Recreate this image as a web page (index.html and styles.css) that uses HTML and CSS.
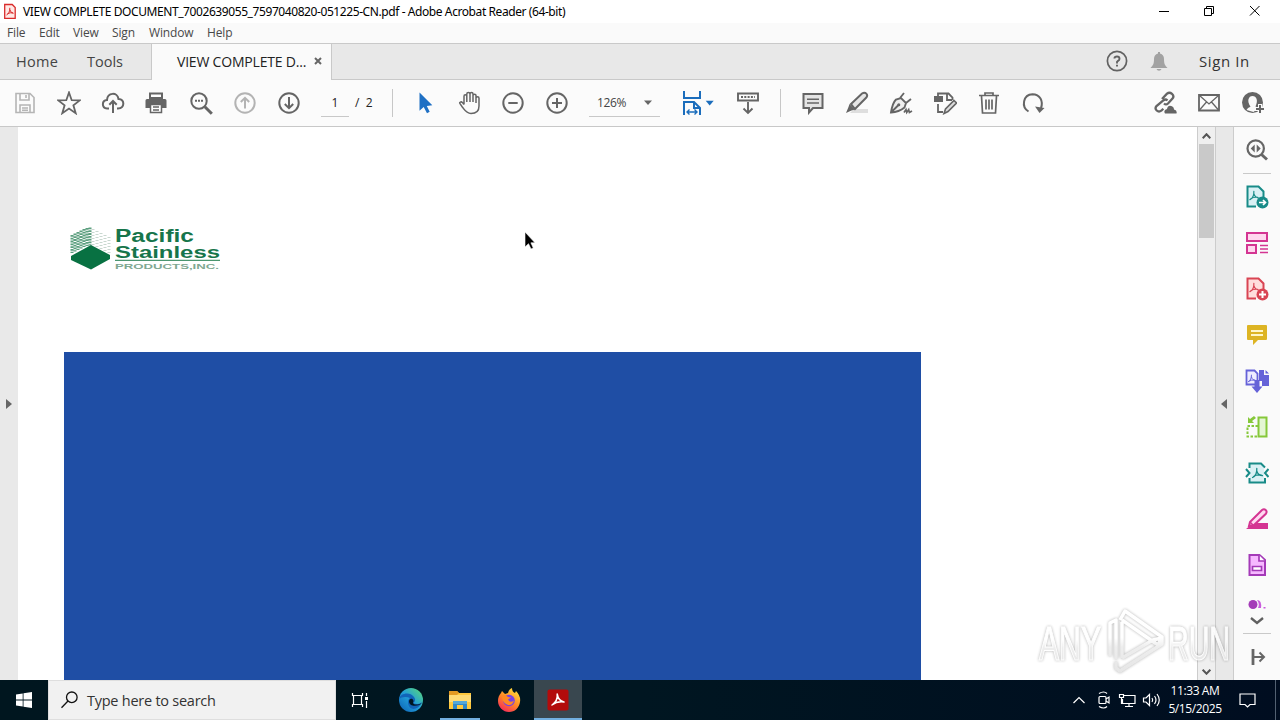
FILE: index.html
```html
<!DOCTYPE html>
<html lang="en">
<head>
<meta charset="utf-8">
<title>Adobe Acrobat Reader (64-bit)</title>
<link rel="stylesheet" href="styles.css">
</head>
<body>
<svg width="0" height="0" class="defs">
  <defs>
    <linearGradient id="edge" x1="0" y1="1" x2="1" y2="0"><stop offset="0" stop-color="#0b5fb4"/><stop offset=".5" stop-color="#229ed9"/><stop offset="1" stop-color="#5ddc72"/></linearGradient>
    <linearGradient id="fox" x1=".8" y1="0" x2=".2" y2="1"><stop offset="0" stop-color="#ffe13d"/><stop offset=".5" stop-color="#ff8b26"/><stop offset="1" stop-color="#f5245d"/></linearGradient>
    <linearGradient id="glass" x1="0" y1="0" x2="0" y2="1"><stop offset=".45" stop-color="#fff"/><stop offset=".6" stop-color="#ebebeb"/><stop offset="1" stop-color="#e2e2e2"/></linearGradient>
    <symbol id="pdfmark" viewBox="0 0 12 12"><path d="M1 10.500C4 9 5.500 5 5.300 1.500M5.300 4C6 7 8 8.500 11 8.700M2 9.500Q5 7.500 9.500 8" fill="none" stroke="currentColor" stroke-width="1.300" stroke-linecap="round"/></symbol>
  </defs>
</svg>
<div class="screen">
  <header class="titlebar">
    <svg class="appicon" width="12" height="16" viewBox="0 0 12 16"><path d="M.7 1.500h7.500l3 3v10.800H.7z" fill="#ffe9e6" stroke="#d92b2b" stroke-width="1.300"/><path d="M2.500 12C4.500 11 6.200 8 5.800 4.800M5.800 6.600Q6.600 10 9.600 10.300M3.500 10.800Q6 9.200 9 10" fill="none" stroke="#d92b2b"/></svg>
    <span class="title">VIEW COMPLETE DOCUMENT_7002639055_7597040820-051225-CN.pdf - Adobe Acrobat Reader (64-bit)</span>
    <svg class="winbtns" width="116" height="22" viewBox="0 0 116 22" fill="none" stroke="#000"><path d="M5 10.500h10M50.500 7.500h7v7h-7zM52.500 7V5.500h7v7H58M96 5l9.500 9.500M105.500 5L96 14.500"/></svg>
  </header>
  <nav class="menubar"><span class="m1">File</span><span class="m2">Edit</span><span class="m3">View</span><span class="m4">Sign</span><span class="m5">Window</span><span class="m6">Help</span></nav>
  <div class="tabs">
    <span class="home">Home</span><span class="tools">Tools</span>
    <div class="tab"><span class="tabname">VIEW COMPLETE D...</span><svg width="8" height="8" viewBox="0 0 8 8"><path d="M1 1l6 6M7 1L1 7" stroke="#666" stroke-width="2"/></svg></div>
    <div class="account">
      <svg width="22" height="22" viewBox="0 0 22 22" fill="none" stroke="#626262"><circle cx="11" cy="11" r="9.600" stroke-width="1.700"/><path d="M8.400 8.500Q8.600 6.500 11 6.500t2.500 2.200Q13.500 10 12 10.900T11 13v.4M11 14.800v1.800" stroke-width="1.900"/></svg>
      <svg class="bell" width="18" height="20" viewBox="0 0 18 20" fill="#a2a2a2"><path d="M8 1h2v1.500q4 1 4 5.500c0 5 1 6.500 3.500 9H.5C3 14.500 4 13 4 8q0-4.500 4-5.500zM6.500 18h5q-.7 1.800-2.500 1.800T6.500 18z"/></svg>
      <span class="signin">Sign In</span>
    </div>
  </div>
  <div class="toolbar">
    <div class="slots g1">
      <svg viewBox="0 0 24 24" stroke="#b5b5b5"><path d="M3 2.500h14l4 4v15H3zM7 3v6h9V3M13 4v3M7 21v-7h10v7M9 17h6M9 19.300h6" stroke-width="1.600"/></svg>
      <svg viewBox="0 0 24 24"><path d="M12 1.500l2.700 7.700 8.100.2-6.400 4.900 2.300 7.900L12 17.500l-6.700 4.700 2.300-7.900L1.200 9.400l8.100-.2z" stroke-width="1.800"/></svg>
      <svg viewBox="0 0 24 24"><path d="M8 17.500H6C.5 17 .5 9.500 6 9 6.500 1 16.500 1 17.500 8c6.500.5 6.500 9-.5 9.500h-1M12 22V10M8.300 13.700L12 10l3.700 3.700" stroke-width="2"/></svg>
      <svg class="printer" viewBox="0 0 24 24"><path d="M6 2.500h12V7H6z" fill="#fff"/><path d="M3 8h18q1.500 0 1.500 1.500V17H18v-4H6v4H1.500V9.500Q1.500 8 3 8z" fill="#656565" stroke="none"/><path d="M6.500 13.500h11v8h-11zM9 16h6M9 19h6" fill="#fff" stroke-width="1.500"/></svg>
      <svg viewBox="0 0 24 24"><circle cx="10" cy="10" r="7.700" stroke-width="2"/><path d="M15.800 15.800l7 7" stroke-width="3"/><path d="M6 9.800h2M9 9.800h2M12 9.800h2" stroke-width="2"/></svg>
      <svg viewBox="0 0 24 24" stroke="#b3b3b3"><circle cx="12" cy="12" r="9.700"/><path d="M12 17.500V7M7.800 11L12 6.800l4.200 4.200" stroke-width="2"/></svg>
      <svg viewBox="0 0 24 24"><circle cx="12" cy="12" r="9.700"/><path d="M12 6v11M7.800 13l4.200 4.200 4.200-4.200" stroke-width="2"/></svg>
    </div>
    <span class="pagebox">1</span><span class="pages">/&nbsp; 2</span><i class="sep s1"></i>
    <div class="slots g2">
      <svg viewBox="0 0 24 24"><path d="M6.500 1.500v18.300l4.200-3.700 3.300 6.100 2.700-1.400-2.900-5.900 5.500-.6z" fill="#1f70c4" stroke="none"/></svg>
      <svg class="hand" viewBox="0 0 24 24"><path d="M6 13.500V5.200Q6 3.800 7.300 3.800t1.500 1.400V3q0-1.500 1.600-1.500T12 3v-.2q0-1.300 1.500-1.300T15 3v1.500q0-1.300 1.500-1.300T18 4.500V7q0-1.200 1.500-1.200T21 7.200V15c0 5-3 7.500-8 7.500-4.500 0-6-3-8.700-6.500L2 12.600q-.8-1 .3-1.500 1.200-.6 2 .3L6 13.500M8.800 5v6M12 3v8M15 4v7M18 7v5" stroke-width="1.500"/></svg>
      <svg viewBox="0 0 24 24"><circle cx="12" cy="12" r="9.700"/><path d="M7.300 12h9.400" stroke-width="2"/></svg>
      <svg viewBox="0 0 24 24"><circle cx="12" cy="12" r="9.700"/><path d="M7 12h10M12 7v10" stroke-width="2"/></svg>
    </div>
    <div class="zoombox"><span>126%</span><svg width="8" height="5"><path d="M0 .5h8L4 5z" fill="#666"/></svg></div>
    <svg class="fit" width="32" height="26" viewBox="0 0 32 26" fill="none" stroke="#1b6dbc" stroke-width="2"><path d="M2 1v7h16V1M2 25V12h10l6 6v7M12 12v6h6"/><path d="M5 22h10M7.500 19.500L5 22l2.500 2.500M12.500 19.500L15 22l-2.500 2.500" stroke-width="1.400"/><path d="M23.700 10.800h8l-4 4.700z" fill="#1b6dbc" stroke="none"/></svg>
    <svg class="scroll" width="24" height="24" viewBox="0 0 24 24"><path d="M2 2.500h20v7H2zM12 11v11M7.500 17.500L12 22l4.500-4.500" stroke-width="1.900"/><path d="M5 6h14" stroke-dasharray="2 1.300"/></svg>
    <i class="sep s2"></i>
    <div class="slots g3">
      <svg viewBox="0 0 24 24"><path d="M2.500 3h19v14H12l-4 4.500V17H2.500z" fill="#e4e4e4"/><path d="M6 8.300h12M6 12h12" stroke-width="1.400"/></svg>
      <svg viewBox="0 0 24 24"><path d="M9 18h14v4H5z" fill="#dedede" stroke="none"/><path d="M6 13L17 2.500q2.500-1.700 4.300.1t-.2 4.200L10 18z" fill="#e5e5e5"/><path d="M4.500 13l5.500 5.500-3.500 1L1 22l2.500-6z" fill="#656565" stroke="none"/></svg>
      <svg viewBox="0 0 24 24"><path d="M2 21.500Q3.500 12 7 8.500l5-1.500 5 5-1.500 4.500Q10 21 2 21.500zM2.500 21l7-7M11 7l4-5M17 12l5-4" fill="#eee" stroke-width="1.900"/><circle cx="9.800" cy="13.700" r="1.500" fill="#656565" stroke="none"/><path d="M15 21.500l2-3 .7 3 2-3 .7 3 2.600-1.500" stroke-width="1.600"/></svg>
      <svg viewBox="0 0 24 24"><path d="M5 6V2.500h10.500l4 4V9M14 3v6h5M5 13v8h5" stroke-width="1.800"/><path d="M1 5h9v6H1z" fill="#656565" stroke="none"/><path d="M21 9.500l2.500 2.500-8.500 8.500-4 2 1.500-4.500z" fill="#ddd" stroke-width="1.600"/></svg>
      <svg viewBox="0 0 24 24"><path d="M2 4.500h20M8 4.500V2h8v2.500M4.500 5l1 17h13l1-17M9 8.500v10M12 8.500v10M15 8.500v10" stroke-width="1.700"/></svg>
      <svg viewBox="0 0 24 24"><path d="M7.500 20.500C0 16 2 3.500 11.500 3.200c7.500 0 11 6.800 8.500 14"/><path d="M14 15.500l9.500 1.500-5 5z" fill="#656565" stroke="none"/></svg>
    </div>
    <div class="slots g4">
      <svg viewBox="0 0 24 24"><path d="M9 8l5-5.300q2.500-2 5 .2t.5 4.700L15 12.500q-2 1.800-4 0M14.500 9.500q-2-2-4.500.2L3.500 15q-2 2.500.2 4.500t4.600.2l2-2" stroke-width="2.300"/><path d="M12 22.500q-2-3.500 2-4.500 1-4.500 5-2.800 2.200 1 2 3.300 3.500 1 2.500 4z" fill="#656565" stroke="none"/></svg>
      <svg viewBox="0 0 24 24"><path d="M2 4h20v15.500H2z" stroke-width="1.800"/><path d="M2.500 4.500L12 13l9.500-8.500M2.500 19l7-8M21.500 19l-7-8" stroke-width="1.300"/></svg>
      <svg viewBox="0 0 24 24"><circle cx="11.500" cy="11.500" r="10.500" fill="#656565" stroke="none"/><path d="M5.500 19q1-2.500 4-3.300C5.500 10 7.500 5 11.500 5s6 4.500 3 10.500l3 1.500-5 4z" fill="#fafafa" stroke="none"/><path d="M19 13v10M14 18h10" stroke="#fafafa" stroke-width="4"/><path d="M19 14v8M15 18h8"/></svg>
    </div>
  </div>
  <main class="workspace">
    <div class="leftstrip"><svg width="6" height="10"><path d="M0 0v10l6-5z" fill="#666"/></svg></div>
    <section class="page">
      <svg class="logo" width="160" height="50" viewBox="0 0 160 50">
        <path d="M8 14v18M11 12.500v18M14 11v18M17 9.500v18M20 8v18M23 7v18M26 6.500v18" stroke="#5c9f7f" stroke-width="3" stroke-dasharray="1.800 1"/>
        <path d="M29 8v16M33 10v16M37 12v16M41 14v16M45 16v16" stroke="#c9d8d0" stroke-width="3" stroke-dasharray="1 2"/>
        <path d="M7 35l20-11 19 10v4L27 48.500 7 39z" fill="#087142"/>
        <g class="brand"><text x="51" y="20.500" font-size="17.500" textLength="79" lengthAdjust="spacingAndGlyphs">Pacific</text><text x="51" y="36.500" font-size="16.500" textLength="105" lengthAdjust="spacingAndGlyphs">Stainless</text><path d="M51 39.300h105" stroke="#4b9670" stroke-width="1.300"/><text x="51" y="48.300" font-size="7" textLength="104" lengthAdjust="spacingAndGlyphs" fill="#7fa892">PRODUCTS,INC.</text></g>
      </svg>
      <div class="bluebox"></div>
    </section>
    <div class="scrollbar"><svg width="9" height="6"><path d="M.7 5.200l3.800-4 3.800 4" fill="none" stroke="#555" stroke-width="2"/></svg><div class="thumb"></div><svg class="down" width="9" height="6"><path d="M.7.7l3.800 4 3.800-4" fill="none" stroke="#555" stroke-width="2"/></svg></div>
    <div class="rightstrip"><svg width="6" height="10"><path d="M6 0v10L0 5z" fill="#666"/></svg></div>
    <aside class="rail">
      <svg class="search" viewBox="0 0 24 24" stroke="#666" stroke-width="2.200"><circle cx="10.700" cy="10.500" r="8.200"/><path d="M16.500 16.500l5.500 5" stroke-width="3"/><path d="M9.700 6.500v8L5.700 10.500zM11.700 6.500v8l4-4z" fill="#666" stroke="none"/></svg>
      <i class="rule"></i>
      <div class="stack">
        <svg viewBox="0 0 24 24" color="#188b88"><path d="M11 21.500H2.500v-20h11l5 5V12" fill="#d9f0f4"/><use href="#pdfmark" x="4" y="5" width="11" height="11"/><circle cx="17.500" cy="17.500" r="6" fill="#188b88" stroke="none"/><path d="M14 17.500h6.500M18 15l2.500 2.500L18 20" stroke="#fff" stroke-width="1.700"/></svg>
        <svg viewBox="0 0 24 24" color="#d43592"><path d="M2 2h20v8H2zM2 14h9v8H2z" fill="#ffd7ee"/><path d="M15 14.500h8M15 18h8M15 21.500h8" stroke-width="1.300"/></svg>
        <svg viewBox="0 0 24 24" color="#d94453"><path d="M11 21.500H2.500v-20h11l5 5V12" fill="#ffdedd"/><use href="#pdfmark" x="4" y="5" width="11" height="11"/><circle cx="17.500" cy="17.500" r="6" fill="#d94453" stroke="none"/><path d="M14 17.500h7M17.500 14v7" stroke="#fff"/></svg>
        <svg viewBox="0 0 24 24" color="#ddb423"><path d="M3 2h18q1 0 1 1v13q0 1-1 1h-8l-5 5v-5H3q-1 0-1-1V3q0-1 1-1z" fill="#ddb423" stroke="none"/><path d="M6 8h12M6 12h12" stroke="#fff6c6"/></svg>
        <svg viewBox="0 0 24 24" color="#6562d8"><path d="M1.500 1.500h8l3 3v11h-11z" fill="#eeecff" stroke-width="1.800"/><use href="#pdfmark" x="2.500" y="5" width="9" height="9"/><path d="M14 1h5v5h5v11h-7v-5h-3zM20.500 1L24 4.500h-3.500z" fill="#6562d8" stroke="none"/><path d="M12 11v7" stroke="#6562d8" stroke-width="5"/><path d="M6.500 17.500h11L12 24z" fill="#6562d8" stroke="none"/></svg>
        <svg viewBox="0 0 24 24" color="#86c83a"><path d="M13.500 2.500h8v19h-8z" fill="#e4f6d4"/><path d="M13 11H2.500v10.500H13" stroke-dasharray="2.500 1.500"/><path d="M3 8V2l2 2 4-3 2 2-4 3 2 2z" fill="#86c83a" stroke="none"/></svg>
        <svg viewBox="0 0 24 24" color="#188b88"><path d="M5 3h11l3 4v14H5z" fill="#d9f0f4" stroke="none"/><path d="M4.500 7V2.500H16L20 6.500M4.500 17v4.500H20V17M1 8l3.500 4L1 16M23.500 8L20 12l3.500 4"/><use href="#pdfmark" x="6.500" y="6" width="12" height="12"/></svg>
        <svg viewBox="0 0 24 24" color="#d43592"><path d="M12 16h11v6H1l5-4z" fill="#d43592" stroke="none"/><path d="M5 15L17 3q2-1.500 3.700 0t.2 3.800L9 18l-5 1z" fill="#ffd9f1"/><path d="M5 15l4 4" stroke-width="1.500"/></svg>
        <svg viewBox="0 0 24 24" color="#a43ab8"><path d="M4.500 2h10l5.500 5v15H4.500z" fill="#f6b8ff"/><path d="M14 2v6h6M7.500 13.500h9v4h-9z" fill="#fff" stroke-width="1.700"/></svg>
      </div>
      <svg class="partial" width="24" height="10" viewBox="0 0 24 10"><circle cx="8" cy="5.500" r="4.500" fill="#a43ab8"/><path d="M12 1q5 0 4 8h-3q2-4-1-8z" fill="#c95bdd"/><path d="M18.500 8h2v1.500h-2z" fill="#c95bdd"/></svg>
      <svg class="more" width="14" height="8"><path d="M1 1l6 5 6-5" fill="none" stroke="#606060" stroke-width="2.300"/></svg>
      <i class="rule"></i>
      <svg class="collapse" width="18" height="18" viewBox="0 0 18 18" fill="none" stroke="#666" stroke-width="2"><path d="M5 1v16" stroke-width="2.800"/><path d="M6 9h10M11.500 4.500L16 9l-4.500 4.500"/></svg>
    </aside>
  </main>
  <footer class="taskbar">
    <div class="start"><svg width="16" height="16"><path d="M0 2.400l6.700-1v6.200H0zM7.500 1.300L16 0v7.600H7.500zM0 8.400h6.700v6.200L0 13.600zM7.500 8.400H16V16l-8.500-1.300z" fill="#fff"/></svg></div>
    <div class="searchbox"><svg width="18" height="18" viewBox="0 0 18 18" fill="none" stroke="#111" stroke-width="1.300"><circle cx="10.800" cy="6.300" r="5.300"/><path d="M7 10L.5 16.700"/></svg><span>Type here to search</span></div>
    <div class="apps">
      <div class="app"><svg width="18" height="18" viewBox="0 0 18 18" fill="none" stroke="#fff" stroke-width="1.200"><path d="M1.500 2V4.500h10V2M1.500 16v-2.500h10V16M2.500 4.500v9M10.500 4.500v9M15.500 2v3M15.500 10v7"/><path d="M14 6h3v3h-3z" fill="#fff" stroke="none"/></svg></div>
      <div class="app"><svg class="edge" width="26" height="26" viewBox="0 0 26 26"><circle cx="13" cy="13" r="12" fill="url(#edge)"/><path d="M1 12C2 6 12 4 16 10c2 3 1 5-1 6 3 2 7 1 9-1-4 9-13 9-14 1-.2-3 1-4 2-5-4-2-9-1-11 1z" fill="#1264b9"/><path d="M11 14c1-4 6-2 4 2 1 2 5 2 9 0-2 3-13 5-13-2z" fill="#001722"/></svg></div>
      <div class="app open"><svg width="24" height="22" viewBox="0 0 24 22"><path d="M1 2h8l2 2h12v16H1z" fill="#ffc83d"/><path d="M1 2h8l2 2-2 2H1z" fill="#e39a22"/><path d="M1 6h22v7H1z" fill="#ffdb75"/><path d="M5 12h14v8h-4v-4H9v4H5z" fill="#3289c8"/><path d="M5 12h14v3H5z" fill="#55a7d8"/></svg></div>
      <div class="app"><svg width="26" height="26" viewBox="0 0 26 26"><path d="M6 4l3 3 3-1q1-4 4-5 0 4 3 5l1-2q5 5 4 11c-1 6-5 10-11 10S2 20 2 14q0-5 3-8z" fill="url(#fox)"/><circle cx="13" cy="13.500" r="5.800" fill="#7542e5"/><path d="M6 9q4-2 6 1l3 .5-3 2q2 4 6 1-2 6-7 4-5-2-5-8.500z" fill="#ff8a22"/></svg></div>
      <div class="app active"><svg width="22" height="22" viewBox="0 0 22 22"><rect x=".5" y=".5" width="21" height="21" rx="2" fill="#b30b0b"/><path d="M5 16Q11 12 10.200 5Q11.500 12 17 13Q10 12 5 16z" fill="none" stroke="#fff" stroke-width="1.500" stroke-linejoin="round"/></svg></div>
    </div>
    <svg class="tray" width="92" height="20" viewBox="0 0 92 20" fill="none" stroke="#fff" stroke-width="1.200"><path d="M1.500 13L7 7.500l5.500 5.500"/><rect x="27" y="6.500" width="7" height="7" rx="1"/><path d="M34 9l3-2v6l-3-2M27 3.500q5-3 8 0M27 16.500q5 3 8 0"/><path d="M52 5.500h11v8H50.500V9M47.500 4.500h4v3h-4zM49.500 8v5.500h1M57 14v2.500M53 16.500h8M71.500 8H74l3.500-3.500v11L74 12h-2.500zM80 8q1.500 2 0 4M82.500 6q3 4 0 8M85 4q4.500 6 0 12"/></svg>
    <div class="clock"><span class="time">11:33 AM</span><span class="date">5/15/2025</span></div>
    <svg class="notice" width="17" height="17" fill="none" stroke="#fff" stroke-width="1.200"><path d="M1 2h15v10.500h-5L8.500 15 6 12.500H1z"/></svg>
    <i class="peek"></i>
  </footer>
  <svg class="pointer" width="12" height="20" viewBox="0 0 12 20"><path d="M1 1v15l3.500-3.300L7 18l2.300-1-2.400-5.200H11z" fill="#000" stroke="#fff" stroke-width=".6"/></svg>
  <svg class="watermark" width="204" height="76" viewBox="0 0 204 76">
    <g class="wm"><text x="5" y="55.500" textLength="62" lengthAdjust="spacingAndGlyphs">ANY</text><text x="134" y="55.500" textLength="62" lengthAdjust="spacingAndGlyphs">RUN</text></g>
    <path class="play" d="M76 52V19l6-3v39M88 18v36M86 16l5-9 37 26-4 8-36-25M88 54l31-18 9-2v6L92 63l-6 4-4-3v-6" fill="none" stroke="url(#glass)" stroke-width="3.500" stroke-linejoin="round"/>
  </svg>
</div>
</body>
</html>
```
FILE: styles.css
```css
* { box-sizing: border-box; }
body { margin: 0; font-family: "Open Sans", "Noto Sans", sans-serif; overflow: hidden; }
.defs { position: absolute; }
.screen { position: relative; width: 1280px; height: 720px; display: flex; flex-direction: column; background: #fff; overflow: hidden; white-space: nowrap; }
svg { display: block; flex: none; }
span { flex: none; }
.titlebar { height: 23px; flex: none; display: flex; align-items: center; padding-left: 4px; background: #fff; }
.title { margin-left: 7px; width: 550px; font: 12px "Noto Sans", sans-serif; letter-spacing: -.415px; color: #000; }
.appicon { margin-top: -2px; }
.winbtns { margin-left: auto; margin-right: 10px; }
.menubar { height: 20px; flex: none; display: flex; align-items: center; padding: 0 0 2px 7px; background: #fafafa; font-size: 12px; color: #484848; letter-spacing: -.15px; }
.m1 { width: 32px; } .m2 { width: 34px; } .m3 { width: 39px; } .m4 { width: 37px; } .m5 { width: 58px; }
.tabs { height: 37px; flex: none; display: flex; align-items: center; border-top: 1px solid #c9c9c9; border-bottom: 1px solid #c9c9c9; background: #e8e8e8; font-size: 14px; color: #444; }
.home { margin-left: 16px; width: 71px; letter-spacing: .3px; font-size: 14.5px; }
.tools { width: 64px; font-size: 14.5px; }
.tab { width: 181px; height: 36px; margin-bottom: -1px; display: flex; align-items: center; padding: 0 0 2px 25px; border-left: 1px solid #c9c9c9; border-right: 1px solid #c9c9c9; background: #fafafa; color: #222; }
.tabname { width: 137px; letter-spacing: -.2px; font-size: 14px; }
.account { margin-left: auto; width: 174px; display: flex; align-items: center; padding-bottom: 2px; }
.bell { margin-left: 22px; }
.signin { margin-left: 31px; font-size: 15px; letter-spacing: .6px; color: #333; }
.toolbar { height: 47px; flex: none; display: flex; align-items: center; border-bottom: 1px solid #c8c8c8; background: #fbfbfb; font-size: 12px; color: #444; }
.slots { display: flex; flex: none; }
.slots svg { width: 24px; height: 24px; margin: 0 10px; }
.slots .printer { margin: 0 11px 0 9px; }
.slots .hand { margin: 0 9px 0 11px; }
.slots svg, .scroll { fill: none; stroke-width: 2; }
.slots svg:not([stroke]), .scroll { stroke: #656565; }
.g1 { margin-left: 3px; }
.pagebox { margin-left: 10px; width: 28px; height: 27px; line-height: 26px; text-align: center; border-bottom: 1px solid #c8c8c8; color: #222; }
.pages { margin-left: 6px; width: 37px; color: #222; padding-bottom: 1px; }
.sep { width: 1px; height: 28px; flex: none; background: #c7c7c7; }
.g2 { margin-left: 10px; }
.zoombox { margin-left: 10px; width: 71px; height: 27px; display: flex; align-items: center; padding-left: 8px; border-bottom: 1px solid #c8c8c8; letter-spacing: -.4px; }
.zoombox span { width: 47px; }
.fit { margin-left: 22px; overflow: visible; }
.scroll { margin-left: 22px; }
.s2 { margin-left: 20px; }
.g3 { margin-left: 10px; }
.g4 { margin-left: auto; margin-right: 5px; }
.workspace { height: 553px; flex: none; display: flex; }
.leftstrip { width: 18px; display: flex; align-items: center; padding-left: 6px; background: #e9e9e9; }
.page { flex: 1; height: 553px; padding: 94px 0 0 46px; background: #fff; }
.brand { font-family: "Liberation Sans", Arial, sans-serif; font-weight: bold; fill: #16754b; }
.bluebox { margin-top: 81px; width: 857px; height: 328px; background: #1f4ea5; }
.scrollbar { width: 19px; display: flex; flex-direction: column; align-items: center; padding: 6px 0 5px; border-left: 1px solid #ccc; border-right: 1px solid #ccc; background: #efefef; }
.thumb { margin-top: 5px; width: 15px; height: 94px; background: #c9c9c9; }
.down { margin-top: auto; }
.rightstrip { width: 18px; display: flex; align-items: center; padding-left: 5px; background: #e8e8e8; border-right: 1px solid #ccc; }
.rail { width: 46px; display: flex; flex-direction: column; align-items: center; background: #fafafa; }
.search { width: 24px; height: 24px; margin: 11px 0 11px; fill: none; }
.rule { width: 28px; height: 1px; flex: none; background: #c9c9c9; }
.stack { margin-top: 11px; display: flex; flex-direction: column; gap: 22px; }
.stack svg { width: 24px; height: 24px; fill: none; stroke: currentColor; stroke-width: 2; }
.partial { margin-top: 22px; }
.more { margin: 8px 0 8px; }
.collapse { margin-top: 14px; }
.taskbar { height: 40px; flex: none; display: flex; align-items: center; background: linear-gradient(90deg, #00161f, #001621 50%, #000d20); color: #fff; }
.start { width: 48px; display: flex; justify-content: center; }
.searchbox { width: 288px; height: 40px; display: flex; align-items: center; padding-left: 12px; background: #f1f1f1; border: 1px solid #dedede; color: #333; }
.searchbox span { margin-left: 8px; font-size: 14.500px; letter-spacing: -.25px; }
.apps { display: flex; height: 40px; }
.app { width: 48px; height: 40px; margin-right: 1.500px; display: flex; align-items: center; justify-content: center; }
.edge { margin-left: 2px; }
.open { box-shadow: inset 0 -2px #72afe0; width: 40px; margin: 0 4.500px 0 5px; }
.active { background: #39474f; box-shadow: inset 0 -2px #72afe0; }
.tray { margin-left: auto; }
.clock { width: 62px; display: flex; flex-direction: column; align-items: center; font-size: 12px; line-height: 18px; letter-spacing: -.4px; padding-bottom: 1px; }
.notice { margin-left: 13px; }
.peek { margin-left: 19px; width: 1px; height: 40px; background: #526071; margin-right: 4px; }
.pointer { position: absolute; left: 524px; top: 231px; }
.watermark { position: absolute; left: 1034px; top: 604px; }
.wm { font-family: "Liberation Sans", Arial, sans-serif; font-size: 49px; fill: url(#glass); stroke: #fff; stroke-width: 1.200px; filter: drop-shadow(0 0 1.500px rgba(0,0,0,.35)); opacity: .85; }
.play { filter: drop-shadow(0 0 1.500px rgba(0,0,0,.35)); opacity: .85; }
```
